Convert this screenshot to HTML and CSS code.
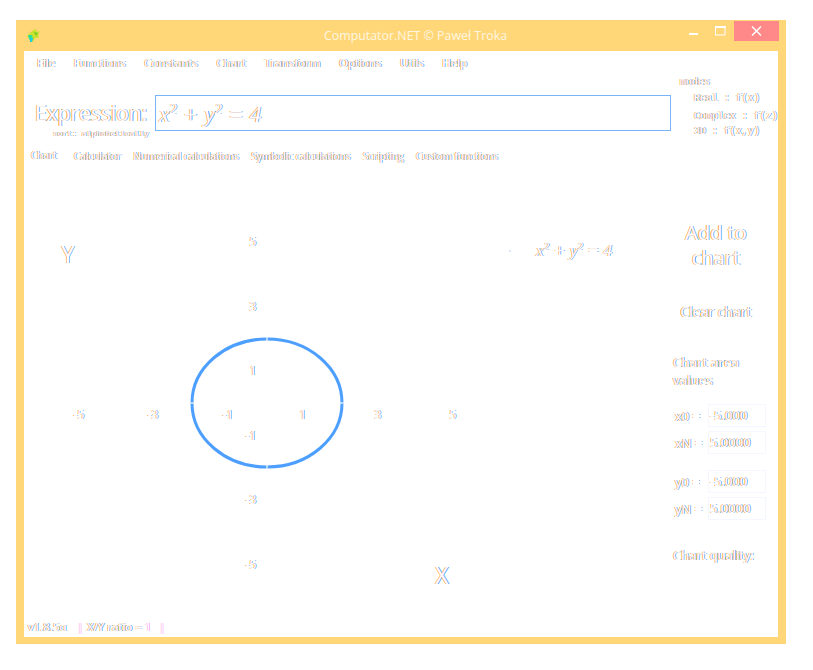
FILE: index.html
```html
<!DOCTYPE html>
<html lang="en">
<head>
<meta charset="utf-8">
<title>Computator.NET</title>
<link rel="stylesheet" href="styles.css">
</head>
<body>
<div class="window">
  <header class="titlebar">
    <svg class="appicon" width="14" height="15" viewBox="0 0 14 15"><path d="M5 3 9 1l1 3 3-1-2 4 1 3-4 0-2 4-3-1 0-3-3-1 2-3z" fill="#c8e030"/><path d="M1 7l4 0 1 4-2 3-2-3z" fill="#30e090"/><path d="M3 10l3 0-1 4-2 0z" fill="#20d0e0"/><path d="M7 4l4 1-2 3z" fill="#70d020"/></svg>
    <div class="title">Computator.NET © Paweł Troka</div>
    <div class="controls">
      <span class="ctl"><svg width="10" height="10" viewBox="0 0 10 10"><rect x="0" y="7" width="9" height="2" fill="#fff"/></svg></span>
      <span class="ctl"><svg width="11" height="10" viewBox="0 0 11 10"><path d="M.5 1.5h9.500v7.500h-9.500z" fill="none" stroke="#fff"/><rect x="0" y="0" width="11" height="2" fill="#fff"/></svg></span>
      <span class="ctl close"><svg width="11" height="10" viewBox="0 0 11 10"><path d="M1 .5 10 9.500M10 .5 1 9.500" stroke="#fff" stroke-width="1.500" fill="none"/></svg></span>
    </div>
  </header>
  <main class="content">
    <nav class="menu fringe">
      <span>File</span><span>Functions</span><span>Constants</span><span>Chart</span><span>Transform</span><span>Options</span><span>Utils</span><span>Help</span>
    </nav>
    <section class="exprrow">
      <div class="exprmain">
        <div class="exprline">
          <div class="exprlabel fringe">Expression:</div>
          <div class="exprinput fringe">x<sup>2</sup> + y<sup>2</sup> = 4</div>
        </div>
        <div class="sort fringe">sort: alphabetically</div>
      </div>
      <div class="modes fringe">
        <div class="modes-title">modes</div>
        <div class="mode">Real : f(x)</div>
        <div class="mode">Complex : f(z)</div>
        <div class="mode">3D : f(x,y)</div>
      </div>
    </section>
    <nav class="tabs fringe">
      <span class="tab-active">Chart</span><span>Calculator</span><span>Numerical calculations</span><span>Symbolic calculations</span><span>Scripting</span><span>Custom functions</span>
    </nav>
    <section class="workspace">
      <div class="chart">
        <svg class="curve" width="160" height="136" viewBox="0 0 160 136">
          <ellipse cx="80" cy="68" rx="75" ry="64" fill="none" stroke="#4d9fff" stroke-width="3"/>
          <path d="M80 2v4M80 130v4M3 68h4M153 68h4" stroke="#d8e8ff" stroke-width="1.500"/>
        </svg>
        <span class="axis axis-y fringe">Y</span>
        <span class="axis axis-x fringe">X</span>
        <span class="tick ty5 fringe">5</span>
        <span class="tick ty3 fringe">3</span>
        <span class="tick ty1 fringe">1</span>
        <span class="tick tyn1 fringe">-1</span>
        <span class="tick tyn3 fringe">-3</span>
        <span class="tick tyn5 fringe">-5</span>
        <span class="tick txn5 fringe">-5</span>
        <span class="tick txn3 fringe">-3</span>
        <span class="tick txn1 fringe">-1</span>
        <span class="tick tx1 fringe">1</span>
        <span class="tick tx3 fringe">3</span>
        <span class="tick tx5 fringe">5</span>
        <span class="legend-dot"></span>
        <span class="legend fringe">x<sup>2</sup> + y<sup>2</sup> = 4</span>
      </div>
      <aside class="side fringe">
        <div class="add">Add to chart</div>
        <div class="clear">Clear chart</div>
        <div class="area">Chart area values</div>
        <div class="fields">
          <div class="field"><label>x0 =</label><span class="box">-5.000</span></div>
          <div class="field"><label>xN =</label><span class="box">5.0000</span></div>
        </div>
        <div class="fields second">
          <div class="field"><label>y0 =</label><span class="box">-5.000</span></div>
          <div class="field"><label>yN =</label><span class="box">5.0000</span></div>
        </div>
        <div class="quality">Chart quality:</div>
      </aside>
    </section>
    <footer class="status fringe">
      <span class="ver">v1.8.5α</span><span class="pipe">|</span><span class="ratio">X/Y ratio = <b class="pink">1</b></span><span class="pipe">|</span>
    </footer>
  </main>
</div>
</body>
</html>
```

FILE: styles.css
```css
* { box-sizing: border-box; }
html, body { margin: 0; height: 100%; background: #fff; }
body { padding: 20px 0 0 16px; font-family: "Open Sans", sans-serif; overflow: hidden; }

.fringe {
  color: #fff;
  text-shadow: -0.8px 0 #ffa040, 0.8px 0 #4a9cff;
}

.window {
  width: 770px;
  height: 624px;
  background: #ffd678;
  padding: 0 8px 7px;
  display: flex;
  flex-direction: column;
}

.titlebar {
  height: 31px;
  flex: none;
  display: flex;
  position: relative;
  align-items: flex-start;
}
.appicon { margin: 8px 0 0 3px; }
.title {
  position: absolute;
  left: 0;
  right: 0;
  top: 6px;
  text-align: center;
  padding-left: 29px;
  color: #fff6e0;
  font-size: 12.400px;
  line-height: 19px;
}
.controls { margin-left: auto; display: flex; position: relative; margin-top: 1px; margin-right: -1px; }
.ctl { width: 27px; height: 20px; display: flex; align-items: center; justify-content: center; }
.close { width: 45px; background: #ff8888; }

.content {
  flex: 1;
  background: #fff;
  display: flex;
  flex-direction: column;
  min-height: 0;
}

.menu {
  height: 24px;
  flex: none;
  display: flex;
  gap: 18.500px;
  padding: 3px 0 0 13px;
  font-size: 11.500px;
  line-height: 17px;
}

.exprrow { display: flex; height: 71px; flex: none; }
.exprmain { width: 647px; padding: 20px 0 0 11px; flex: none; }
.exprline { display: flex; align-items: stretch; gap: 5px; }
.exprlabel { font-size: 21px; line-height: 36px; width: 115px; flex: none; }
.exprinput {
  flex: 1;
  height: 36px;
  border: 1px solid #78b4f8;
  padding-left: 3px;
  font: italic 23.500px/36px "Liberation Serif", serif;
}
.exprinput sup, .legend sup { font-size: 62%; line-height: 0; vertical-align: 0.55em; }
.sort { font: 8px/10px "Liberation Mono", monospace; margin: -2px 0 0 18px; }

.modes { padding: 2px 0 0 9px; font: 10px/14px "Liberation Mono", monospace; }
.modes-title { height: 14px; line-height: 12px; }
.mode { padding-left: 14px; }
.mode:nth-child(2) { margin-top: 1px; height: 18px; line-height: 14px; }
.mode:nth-child(3) { height: 15px; }

.tabs {
  height: 26px;
  flex: none;
  display: flex;
  gap: 12.400px;
  padding: 2px 0 0 7px;
  font-size: 10px;
  line-height: 16px;
}
.tab-active { margin: -1px 5px 0 0; }

.workspace { flex: 1; display: flex; min-height: 0; }
.chart { position: relative; width: 649px; flex: none; }
.curve { position: absolute; left: 163px; top: 163px; }
.axis { position: absolute; font-size: 23px; line-height: 24px; transform: translate(-50%, -50%); }
.axis-y { left: 44px; top: 82px; }
.axis-x { left: 418px; top: 403px; }
.tick { position: absolute; font-size: 12px; line-height: 14px; transform: translate(-50%, -50%); }
.ty5 { left: 229px; top: 70px; }
.ty3 { left: 229px; top: 135px; }
.ty1 { left: 229px; top: 199px; }
.tyn1 { left: 227px; top: 264px; }
.tyn3 { left: 227px; top: 328px; }
.tyn5 { left: 227px; top: 393px; }
.txn5 { left: 55px; top: 243px; }
.txn3 { left: 129px; top: 243px; }
.txn1 { left: 204px; top: 243px; }
.tx1 { left: 279px; top: 243px; }
.tx3 { left: 354px; top: 243px; }
.tx5 { left: 429px; top: 243px; }
.legend-dot { position: absolute; left: 485px; top: 78px; width: 2px; height: 2px; background: #dbe6ff; }
.legend { position: absolute; left: 512px; top: 66px; font: italic 17.500px/24px "Liberation Serif", serif; }

.side { flex: 1; display: flex; flex-direction: column; padding-top: 48px; }
.add { width: 86px; font-size: 20px; line-height: 25px; text-align: center; }
.clear { margin-top: 32px; width: 86px; font-size: 14px; line-height: 20px; text-align: center; white-space: nowrap; }
.area { margin-top: 31px; width: 80px; font-size: 13.500px; line-height: 18px; }
.fields { margin-top: 15px; display: flex; flex-direction: column; gap: 4px; }
.fields.second { margin-top: 16px; }
.field { display: flex; align-items: center; height: 23px; font-size: 13px; }
.field label { width: 35px; flex: none; padding-left: 2px; white-space: nowrap; }
.box {
  width: 58px;
  height: 23px;
  border: 1px solid #f4f7ff;
  padding-left: 1px;
  font-size: 13px;
  line-height: 21px;
}
.quality { margin-top: 25px; font-size: 13px; line-height: 20px; white-space: nowrap; }

.status {
  height: 22px;
  flex: none;
  display: flex;
  padding: 2px 0 0 4px;
  font-size: 11.500px;
  line-height: 20px;
}
.ver { width: 49px; }
.pipe { width: 10px; text-shadow: -0.8px 0 #ffb0d8, 0.8px 0 #f8a0ff; }
.ratio { width: 72px; }
.pink { font-weight: 400; text-shadow: -0.8px 0 #ffb0d8, 0.8px 0 #f8a0ff; }
```
